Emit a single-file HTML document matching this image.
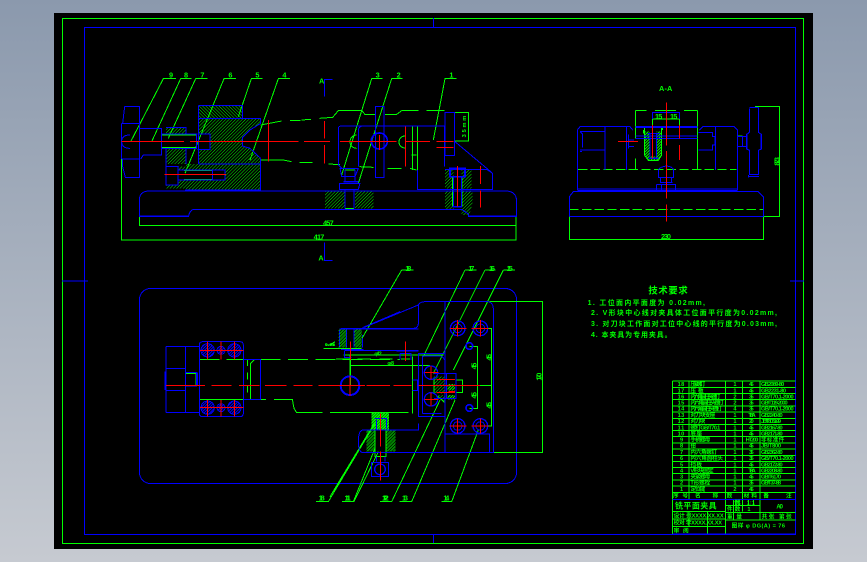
<!DOCTYPE html>
<html><head><meta charset="utf-8"><style>
html,body{margin:0;padding:0;width:867px;height:562px;overflow:hidden;background:linear-gradient(180deg,#8b99ad 0%,#c6cad1 100%)}
#c{position:absolute;left:54px;top:13px;width:759px;height:536px;background:#000}
svg{position:absolute;left:0;top:0}
.b{stroke:#0000ff;fill:none;stroke-width:3}
.g{stroke:#00ff00;fill:none;stroke-width:3}
.r{stroke:#ff0000;fill:none;stroke-width:3}
text{fill:#00ff00;font-family:"Liberation Sans","Noto Sans CJK SC",sans-serif;font-weight:bold;stroke:none}
</style></head><body><div id="c"></div>
<svg width="867" height="562" viewBox="0 0 867 562" shape-rendering="crispEdges">
<defs>
<pattern id="h" width="7" height="7" patternUnits="userSpaceOnUse" patternTransform="rotate(45)"><line x1="0" y1="0" x2="0" y2="7" stroke="#00ff00" stroke-width="3"/></pattern>
<pattern id="h2" width="7" height="7" patternUnits="userSpaceOnUse" patternTransform="rotate(-45)"><line x1="0" y1="0" x2="0" y2="7" stroke="#00ff00" stroke-width="3"/></pattern>
<pattern id="f" width="6" height="6" patternUnits="userSpaceOnUse" patternTransform="rotate(45)"><rect width="3" height="6" fill="#00ff00"/></pattern>
<pattern id="m" width="6" height="6" patternUnits="userSpaceOnUse" patternTransform="rotate(45)"><rect width="3" height="6" fill="#0000ff"/></pattern>
</defs>
<!-- frames -->
<rect x="62.5" y="18.5" width="741" height="525" fill="none" stroke="#00ff00"/>
<rect x="84.5" y="27.5" width="711" height="507" fill="none" stroke="#0000ff"/>
<path d="M62,281H88M790,281H804" stroke="#0000ff" fill="none"/>
<path d="M433.500,18V27M433.500,534V543" stroke="#0000ff" fill="none"/>
<rect x="139.500" y="288.500" width="377" height="195" rx="11" fill="none" stroke="#0000ff"/>

<!-- Front view -->
<g transform="matrix(.33333 0 0 .33333 110 60)">
<path d="M265,137H398V175H265Z" fill="url(#h2)"/>
<path d="M265,175H452V190L420,210L398,232V258L420,265L452,295V390H228V385H168V375H204V320H228V312H265Z" fill="url(#h)"/>
<path d="M168,202H228V222H168ZM168,265H228V312H168Z" fill="url(#h)"/>
<rect x="265" y="222" width="35" height="46" fill="#000"/>
<rect x="204" y="330" width="141" height="30" fill="#000"/>
<path d="M645,393H705V445H645ZM735,393H790V445H735ZM1005,330H1030V385H1005ZM1055,330H1085V385H1055ZM1005,393H1030V448H1005ZM1055,393H1088V425L1078,465H1055Z" fill="url(#h)"/>
<path class="g" d="M35,265V540H1218V470M88,470V497H1218M62,245L160,56H198M125,245L212,56H245M175,235L257,56H293M225,340L342,56H378M385,170L424,56H458M420,300L505,56H540M695,345L785,56H818M745,370L845,56H878M970,240L1005,56H1040"/>
<path class="g" d="M452,195L515,183M540,182H572M575,180L603,178M628,175L668,172L685,152H755L765,163H797M825,163H860L875,152H925M950,152H1003M452,300H520L545,305M568,308H608M655,312L690,314M748,320L790,322M833,325H875M900,325L920,330"/>
<path class="g" d="M1033,157H1075V243H1033M908,200V330M922,200V330M155,225H260M155,262H260M222,332H308M222,358H308M705,445H732M1028,350V440M1056,350V440"/>
<path class="g" d="M740,225A20,20 0 1 0 740,265M885,228A18,18 0 1 0 885,264M905,285H920M705,330H735"/>
<path class="b" d="M88,470V420Q88,395 115,393H1190Q1220,395 1220,425V470H1075V462L1055,448H250Q240,450 235,470ZM88,468H235M1075,468H1220"/>
<path class="b" d="M44,140H88V352H46L38,320V297H88M38,190L44,140M35,190H90M35,190V297M88,205H155V285H100L92,297M60,225Q35,225 35,244Q35,265 60,265M155,222H260V265H155M168,202H228V222M168,265V375M228,265V312"/>
<path class="b" d="M265,137H398V175M265,137V312M265,175H452V190M452,295V390H225M265,312H452M168,320H204V375H168ZM204,330H345V360H204M308,330V360M262,222H300V268H262"/>
<path class="b" d="M452,190L420,210L398,232V258L420,265L452,295"/>
<path class="b" d="M685,205Q685,198 695,198H1003V320M685,205V315L695,325M745,205L755,198M745,205V320M797,140H822V352H797ZM922,330V388H1148V340L1035,245M1130,328L1148,340M1005,328H1130M1005,157H1033V287H1005Z"/>
<path class="b" style="stroke-width:5" d="M1020,325H1065V350H1020ZM1028,440H1056M700,365H745M808,219A24,24 0 1 0 808.100,219"/>
<path class="b" d="M1030,350V440M1055,350V440M690,325H745L735,350H695ZM705,330V365M735,330V365M688,370H750L745,388H688ZM705,388V445M732,388V445"/>
<path class="r" d="M35,244H222M240,244H565M582,244H660M690,244H860M885,244H960M980,244H1030M475,180V305M643,183V235M643,255V310M808,225V270M886,200V320M1042,318V440M1111,318V372M1111,392V443M980,262H1030M163,343H348"/>
<path class="b" d="M668,58H643V110M643,547V601H668"/>
<g font-size="22">
<text x="177" y="52">9</text><text x="222" y="52">8</text><text x="271" y="52">7</text><text x="355" y="52">6</text><text x="436" y="52">5</text><text x="517" y="52">4</text><text x="627" y="71">A</text><text x="625" y="602">A</text><text x="797" y="52">3</text><text x="860" y="52">2</text><text x="1018" y="52">1</text><text x="639" y="497" textLength="32">457</text><text x="611" y="539" textLength="32">417</text>
<text transform="translate(1068,232) rotate(-90)" font-size="17" textLength="65">35mm</text>
</g>
</g>

<!-- Section A-A -->
<g transform="matrix(.33333 0 0 .33333 560 75)">
<path d="M253,170V240L265,256H295L305,240V170H290V245H270V170Z" fill="url(#f)"/>
<path class="g" d="M28,424V493H610V424H658V95H585M226,106H260M285,106H348M372,106H412M226,106V190M226,250V283M412,106V283M277,132H359M277,132V155M359,132V155M533,183H548M253,155V240L265,256H295L305,240V155M250,165V175M308,155V165"/>
<path class="g" stroke-dasharray="28 10" d="M28,403H610M54,283H530"/>
<path class="b" d="M52,345V165L60,155H210L218,165M135,155V285M200,155V285M60,170H133M60,225H133M68,175V218M60,170L68,178M60,230H66M418,165L428,155H522L532,165V345M466,155V285M415,172H458V185H465V210H458V225H415M52,342H532M52,346H532M226,183H412M226,190H412M28,425V365L40,350H595L610,365V425M28,424H610M277,132V112H359V132M568,97H595M568,100V172L560,178V222L568,226V298H595V226L604,222V178L595,172V97M565,305H597M565,300V308M532,185H560M532,215H560M548,185V215M295,285Q300,275 320,273Q338,275 341,285V308H295ZM302,308V322M335,308V322M300,322H338M290,328H346V348M290,328V348M305,328V345M205,178V220M205,195H222M205,215H222M262,175H298M270,175V245M290,175V245"/>
<path class="b" style="stroke-width:5" d="M226,156H412M265,250H295M560,178V222M604,178V222"/>
<path class="r" d="M319,82V212M319,228V370M319,388V440M174,199H234M278,150V250M358,150V190M358,210V255"/>
<g font-size="22"><text x="297" y="48" textLength="40">A-A</text><text x="285" y="132" textLength="22">15</text><text x="330" y="132" textLength="22">15</text><text x="303" y="492" textLength="30">230</text>
<text transform="translate(658,272) rotate(-90)" textLength="26">873</text></g>
</g>

<!-- Plan left -->
<g transform="matrix(.33333 0 0 .33333 130 260)">
<path d="M628,207H650V262H628ZM672,207H695V262H672ZM710,510H735V575H710ZM768,510H797V575H768Z" fill="url(#h)"/>
<path d="M725,458H777V510H725Z" fill="url(#f)"/>
<circle cx="233" cy="271" r="20" fill="url(#m)"/><circle cx="273" cy="271" r="12" fill="url(#m)"/><circle cx="313" cy="271" r="20" fill="url(#m)"/>
<circle cx="233" cy="443" r="20" fill="url(#m)"/><circle cx="273" cy="443" r="12" fill="url(#m)"/><circle cx="313" cy="443" r="20" fill="url(#m)"/>
<path class="g" d="M168,340H198V376H168M362,418V310L372,300M660,285V377M660,317H810M640,285H810M580,265H695M558,725H595L735,490M636,725H672L745,575M735,510V590H768V510M600,255L615,245M585,255H615"/>
<path class="g" stroke-dasharray="60 22" d="M208,298H340M392,298H810"/>
<path class="g" stroke-dasharray="20 20" d="M352,298V418"/>
<path class="g" d="M208,418H340M392,418H408M432,418H487L492,445L500,458H577M600,458H665M690,458H810"/>
<path class="b" d="M108,259H208M108,458H208M108,259V458M166,259V458M108,325H166M108,391H166M166,338H200V378H166M203,338V378M105,335V390M208,255Q208,245 218,245H330Q340,245 340,255V460Q340,470 330,470H218Q208,470 208,460ZM340,298H392V418H340"/>
<circle class="b" cx="233" cy="271" r="20"/><circle class="b" cx="273" cy="271" r="12"/><circle class="b" cx="313" cy="271" r="20"/>
<circle class="b" cx="233" cy="443" r="20"/><circle class="b" cx="273" cy="443" r="12"/><circle class="b" cx="313" cy="443" r="20"/>
<path class="b" d="M628,215Q628,205 640,205H810M628,215V262M650,207V262M672,207V262M633,268H700M645,272H810M700,202L810,155M697,225V262M643,272V292H665M733,475H770V505M740,480V510M685,545Q685,510 700,510H810M685,545Q685,578 700,578H810M725,607H775V650H725ZM740,590V605M765,590V605"/>
<circle class="b" cx="750" cy="628" r="16" style="stroke-width:4"/>
<circle class="b" cx="660" cy="377" r="28" style="stroke-width:6"/>
<path class="r" d="M210,271H340M233,245V298M273,245V298M313,245V298M210,443H340M233,420V470M273,420V470M313,420V470M108,376H225M245,376H305M327,376H388M405,376H470M490,376H548M565,376H625M640,376H690M710,376H760M790,376H810M660,348V408M661,245V300M751,460V560M751,575V662"/>
<g font-size="22"><text x="566" y="722" textLength="18">18</text><text x="644" y="722" textLength="18">11</text><text x="756" y="722" textLength="18">12</text><text x="585" y="258" font-size="14" textLength="30">0.05</text></g>
</g>

<!-- Plan right -->
<g transform="matrix(.33333 0 0 .33333 330 260)">
<path d="M26,207H50V262H26ZM72,207H96V262H72ZM110,510H135V575H110ZM168,510H197V575H168Z" fill="url(#h)"/>
<path d="M312,350H345V400H312ZM320,410L345,428V405H320Z" fill="url(#h)"/>
<path d="M352,372H375V392H352ZM352,405H375V418H352ZM125,458H177V510H125Z" fill="url(#f)"/>
<path class="g" d="M478,125H637V577H478M455,205H485V498H455M418,260H442V445H418M248,290V460M62,290V375M62,317H300M60,285H340M0,265H95M215,30H250M215,30L96,235M405,30H440M405,30L280,290M465,30H497M465,30L310,340M520,30H555M520,30L370,330M36,725H70L135,565M150,725H185L330,420M208,725H245L375,420M335,725H365L445,510M0,710L130,495M312,352V400L345,428M135,510V590H168V510M378,360H398V398H378M440,376H485"/>
<path class="g" stroke-dasharray="40 25" d="M18,297H240M0,458H235"/>
<path class="b" d="M265,135L96,205H250Q265,205 265,190V135Q270,125 285,125H475Q490,130 490,145V578H100M345,125V578M343,522H478V578M265,280H345V470H265ZM277,288V460M277,288H335M277,460H335M200,273H265M210,280H245M210,280V298M243,280V300M28,207H265M62,272H265M133,475H170V505M140,480V510M85,545Q85,510 100,510H265V490M85,545Q85,578 100,578H345M125,607H175V650H125ZM140,590V605M165,590V605M248,360H262V392H248M312,340H378V415H312M350,340V415M345,300L335,288"/>
<g class="b">
<circle cx="383" cy="205" r="22" style="stroke-width:4"/><circle cx="383" cy="205" r="13"/>
<circle cx="451" cy="205" r="22" style="stroke-width:4"/><circle cx="451" cy="205" r="13"/>
<circle cx="383" cy="498" r="22" style="stroke-width:4"/><circle cx="383" cy="498" r="13"/>
<circle cx="451" cy="498" r="22" style="stroke-width:4"/><circle cx="451" cy="498" r="13"/>
<circle cx="418" cy="258" r="10" style="stroke-width:5"/><circle cx="418" cy="444" r="10" style="stroke-width:5"/>
<circle cx="303" cy="338" r="20" style="stroke-width:4"/><circle cx="303" cy="418" r="20" style="stroke-width:4"/>
<circle cx="60" cy="377" r="28" style="stroke-width:6"/><circle cx="150" cy="628" r="16" style="stroke-width:4"/>
</g>
<path class="r" d="M0,376H105M125,376H180M205,376H245M265,376H450M320,358H375M320,398H375M355,395H375M60,348V408M61,245V300M226,245V303M151,460V560M151,575V662M360,205H410M383,180V230M425,205H475M451,180V230M360,498H410M383,475V520M425,498H475M451,475V520M283,338H325M303,318V358M283,418H325M303,398V438"/>
<g font-size="22"><text x="226" y="33" textLength="18">18</text><text x="415" y="33" textLength="18">17</text><text x="477" y="33" textLength="18">16</text><text x="530" y="33" textLength="18">15</text>
<text x="44" y="722" textLength="18">11</text><text x="158" y="722" textLength="18">12</text><text x="216" y="722" textLength="18">13</text><text x="340" y="722" textLength="18">14</text>
<text x="133" y="287" font-size="16" textLength="22">φ12</text><text x="172" y="315" font-size="16" textLength="20">φ8</text>
<text transform="translate(635,362) rotate(-90)" textLength="24">170</text>
<text transform="translate(484,302) rotate(-90)" textLength="20">45</text><text transform="translate(440,328) rotate(-90)" textLength="20">45</text><text transform="translate(440,416) rotate(-90)" textLength="20">45</text><text transform="translate(484,446) rotate(-90)" textLength="20">45</text></g>
</g>

<!-- Tech requirements -->
<g transform="matrix(.33333 0 0 .33333 575 275)">
<text x="220" y="56" font-size="28" textLength="118">技术要求</text>
<g font-size="21">
<text x="38" y="90" textLength="352">1. 工位面内平面度为 0.02mm,</text>
<text x="48" y="120" textLength="558">2. V形块中心线对夹具体工位面平行度为0.02mm,</text>
<text x="48" y="153" textLength="558">3. 对刀块工作面对工位中心线的平行度为0.03mm,</text>
<text x="48" y="186" textLength="242">4. 本夹具为专用夹具。</text>
</g>
</g>

<!-- Title block -->
<g transform="matrix(.33333 0 0 .33333 665 375)">
<path class="g" d="M22,18H392M22,37H392M22,56H392M22,74H392M22,93H392M22,111H392M22,130H392M22,148H392M22,167H392M22,185H392M22,204H392M22,222H392M22,241H392M22,259H392M22,278H392M22,296H392M22,315H392M22,333H392M22,352H392M22,18V477M72,18V373M182,18V477M232,18V373M285,18V435M22,410H182M22,432H182M22,455H182M128,410V477M72,410V455M182,392H285M182,412H392M182,435H392M205,373V435M232,373V410M250,373V392M265,373V392"/>
<path class="b" d="M22,373H392M22,477H392"/>
<g font-size="17">
<text x="38" y="33" textLength="20">18</text><text x="76" y="33" textLength="45">压紧螺钉</text><text x="205" y="33">1</text><text x="252" y="33" textLength="14">45</text><text x="288" y="33" textLength="70">GB2089-80</text>
<text x="38" y="52" textLength="20">17</text><text x="76" y="52" textLength="40">压板</text><text x="205" y="52">1</text><text x="252" y="52" textLength="14">45</text><text x="288" y="52" textLength="75">GB2231-80</text>
<text x="38" y="70" textLength="20">16</text><text x="76" y="70" textLength="90">内六角圆柱头螺钉</text><text x="205" y="70">2</text><text x="252" y="70" textLength="14">35</text><text x="288" y="70" textLength="98">GB/T70.1-2000</text>
<text x="38" y="89" textLength="20">15</text><text x="76" y="89" textLength="100">内六角圆柱头螺钉</text><text x="205" y="89">2</text><text x="252" y="89" textLength="14">35</text><text x="288" y="89" textLength="80">GB/T119-2000</text>
<text x="38" y="107" textLength="20">14</text><text x="76" y="107" textLength="95">内六角圆柱头螺钉</text><text x="205" y="107">4</text><text x="252" y="107" textLength="14">35</text><text x="288" y="107" textLength="98">GB/T70.1-2000</text>
<text x="38" y="126" textLength="20">13</text><text x="76" y="126" textLength="75">对刀块支座</text><text x="205" y="126">1</text><text x="250" y="126" textLength="22">T8A</text><text x="288" y="126" textLength="65">GB2240-80</text>
<text x="38" y="144" textLength="20">12</text><text x="76" y="144" textLength="45">对刀块</text><text x="205" y="144">1</text><text x="252" y="144" textLength="14">20</text><text x="288" y="144" textLength="60">JB/T8031-99</text>
<text x="38" y="163" textLength="20">11</text><text x="76" y="163" textLength="90">螺钉GB/T70.1</text><text x="205" y="163">1</text><text x="252" y="163" textLength="14">45</text><text x="288" y="163" textLength="65">GB2167-80</text>
<text x="38" y="181" textLength="20">10</text><text x="76" y="181" textLength="35">底座</text><text x="205" y="181">1</text><text x="252" y="181" textLength="14">45</text><text x="288" y="181" textLength="65">GB2171-80</text>
<text x="45" y="200">9</text><text x="76" y="200" textLength="60">手柄螺母</text><text x="205" y="200">1</text><text x="242" y="200" textLength="38">HT200</text><text x="288" y="200" textLength="70">非标准件</text>
<text x="45" y="218">8</text><text x="76" y="218" textLength="20">钳</text><text x="205" y="218">1</text><text x="252" y="218" textLength="14">45</text><text x="288" y="218" textLength="60">JB/T800</text>
<text x="45" y="237">7</text><text x="76" y="237" textLength="80">内六角螺钉</text><text x="205" y="237">1</text><text x="252" y="237" textLength="14">35</text><text x="288" y="237" textLength="65">GB2362-80</text>
<text x="45" y="255">6</text><text x="76" y="255" textLength="98">内六角圆柱头</text><text x="205" y="255">1</text><text x="252" y="255" textLength="14">35</text><text x="288" y="255" textLength="98">GB/T70.1-2000</text>
<text x="45" y="274">5</text><text x="76" y="274" textLength="35">挡板</text><text x="205" y="274">1</text><text x="252" y="274" textLength="14">45</text><text x="288" y="274" textLength="65">GB2172-80</text>
<text x="45" y="292">4</text><text x="76" y="292" textLength="70">V形块固定</text><text x="205" y="292">1</text><text x="250" y="292" textLength="22">T8A</text><text x="288" y="292" textLength="65">GB2208-80</text>
<text x="45" y="311">3</text><text x="76" y="311" textLength="60">夹紧螺母</text><text x="205" y="311">1</text><text x="252" y="311" textLength="14">45</text><text x="288" y="311" textLength="60">GB/T6170</text>
<text x="45" y="329">2</text><text x="76" y="329" textLength="60">T形螺栓</text><text x="205" y="329">1</text><text x="252" y="329" textLength="14">35</text><text x="288" y="329" textLength="60">GB/T37-88</text>
<text x="45" y="348">1</text><text x="76" y="348" textLength="45">定位键</text><text x="205" y="348">2</text><text x="252" y="348" textLength="14">45</text>
<text x="24" y="367" textLength="45">序  号</text><text x="90" y="367" textLength="70">名  称</text><text x="185" y="367" textLength="18">数</text><text x="236" y="367" textLength="40">材料</text><text x="295" y="367" textLength="85">备   注</text>
<text x="208" y="388" textLength="15">比例</text><text x="245" y="388" textLength="25">1:1</text><text x="186" y="408" textLength="40">件数</text><text x="247" y="408">1</text><text x="334" y="400" font-size="18" textLength="20">A0</text>
<text x="26" y="428" textLength="150">设计 张XXXX.XX.XX</text><text x="26" y="448" textLength="145">校对 李XXXX.XX.XX</text><text x="26" y="472" textLength="45">审 阅</text>
<text x="186" y="430" textLength="45">重量</text><text x="290" y="430" textLength="90">共张 第张</text><text x="200" y="458" textLength="160">图样 φ DG(A) = 76</text>
</g>
<text x="30" y="401" font-size="24" textLength="125">铣平面夹具</text>
</g>
</svg></body></html>
